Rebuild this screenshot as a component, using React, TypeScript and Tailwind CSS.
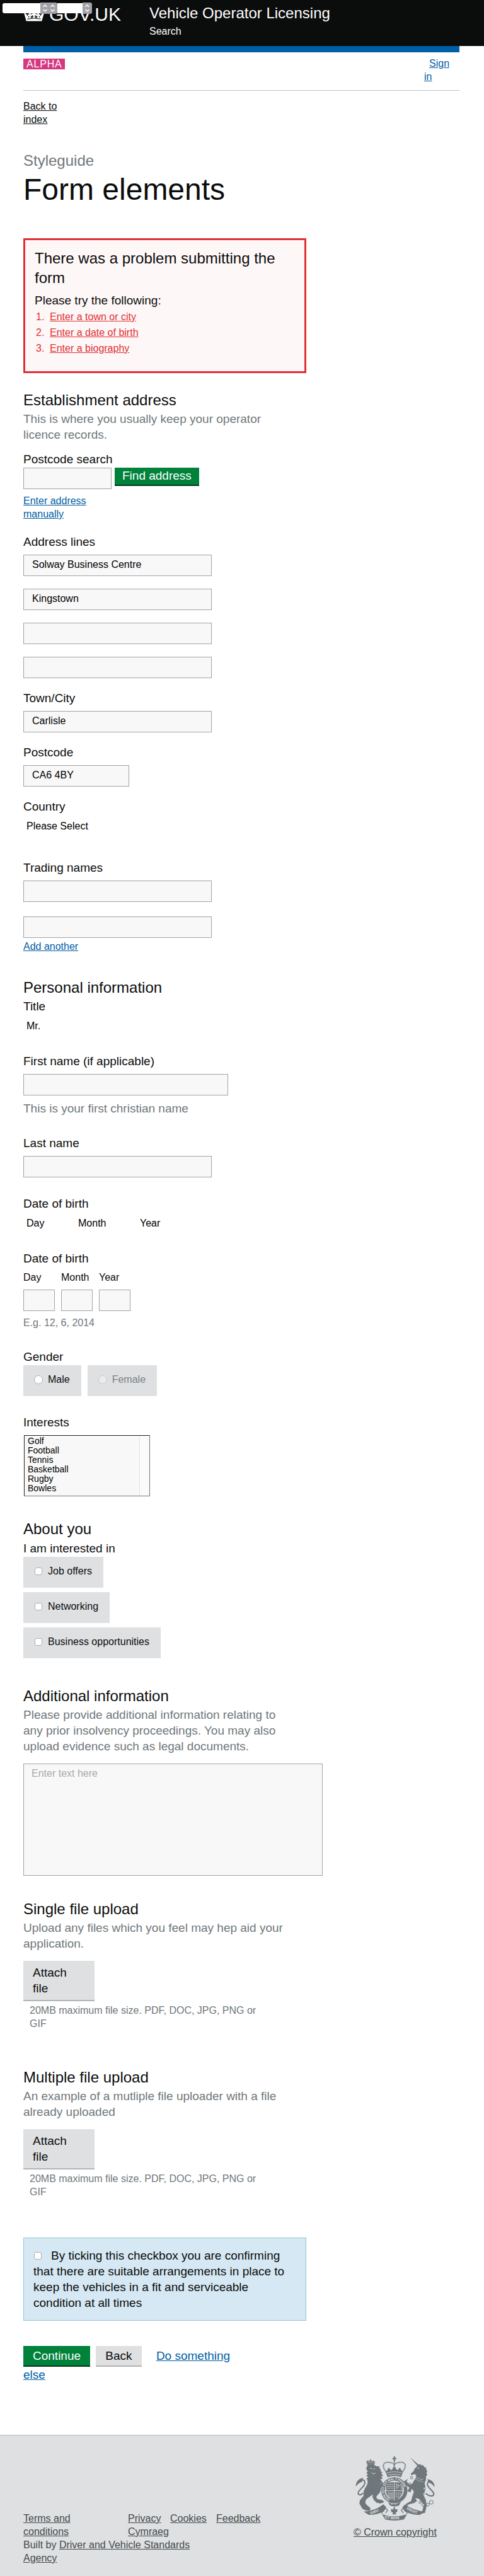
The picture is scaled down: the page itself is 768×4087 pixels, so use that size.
import React, { type ReactNode } from "react";

const inputBase =
  "block h-[34px] rounded-none border border-[#a1a3a5] bg-[#f8f8f8] px-[13px] pb-[3px] text-base text-black outline-none";
const linkBlue = "text-[#005ea5] underline";
const selectBase =
  "block h-[34px] appearance-none bg-transparent pl-[5px] pb-[13px] text-base leading-[21px] text-black outline-none";

function Heading({ children }: { children: ReactNode }) {
  return <h2 className="text-2xl leading-[31px]">{children}</h2>;
}

function Hint({ children }: { children: ReactNode }) {
  return <p className="mt-0.5 max-w-[415px] text-[19px] leading-[25px] text-[#6f777b]">{children}</p>;
}

function Label({ htmlFor, children }: { htmlFor: string; children: ReactNode }) {
  return (
    <label htmlFor={htmlFor} className="mb-2 block text-[19px] leading-[25px]">
      {children}
    </label>
  );
}

function Choice({ type, name, label, disabled }: { type: "radio" | "checkbox"; name: string; label: string; disabled?: boolean }) {
  return (
    <label
      className={`flex h-[49px] w-fit items-start bg-[#dee0e2] pt-3 pr-[18px] text-base leading-[21px] ${
        type === "radio" ? "gap-2 pl-[17px]" : "gap-[9px] pl-[18px]"
      } ${disabled ? "text-[#7b8285]" : ""}`}
    >
      <input
        type={type}
        name={name}
        disabled={disabled}
        className={
          type === "radio"
            ? "mt-1 size-3.5 appearance-none rounded-full border border-[#b0b0b0] bg-white checked:bg-[#333] disabled:border-[#c8c8c8] disabled:bg-[#ececee]"
            : "mt-[5px] size-3 appearance-none rounded-[3px] border border-[#b0b0b0] bg-white checked:bg-[#333]"
        }
      />
      {label}
    </label>
  );
}

function Upload({ id, multiple }: { id: string; multiple?: boolean }) {
  return (
    <>
      <label
        htmlFor={id}
        className="mt-[15px] block w-[113px] cursor-pointer border-b-2 border-[#b2b4b6] bg-[#dee0e2] px-[15px] py-1.5 pr-8 text-[19px] leading-[25px]"
      >
        Attach file
        <input id={id} type="file" multiple={multiple} className="sr-only" />
      </label>
      <p className="mt-1 ml-2.5 max-w-[380px] text-base leading-[21px] text-[#6f777b]">
        20MB maximum file size. PDF, DOC, JPG, PNG or GIF
      </p>
    </>
  );
}

function Arrows() {
  return (
    <svg viewBox="0 0 15 18" className="h-[18px] w-[15px]" aria-hidden="true">
      <path d="M0 0h12q3 0 3 3v12q0 3-3 3H0z" fill="#a3a2a7" />
      <path d="M4.5 7 7.5 4l3 3M4.5 11l3 3 3-3" fill="none" stroke="#fff" strokeWidth="1.5" />
    </svg>
  );
}

function MiniSelect({ label, field }: { label: string; field: string }) {
  return (
    <div className="flex items-center">
      <select aria-label={label} className={`h-4 appearance-none bg-white text-xs outline-none ${field}`}>
        <option value=""></option>
      </select>
      <Arrows />
    </div>
  );
}

function Crown() {
  return (
    <svg viewBox="0 0 34 29" className="h-[29px] w-[34px]" aria-hidden="true" fill="#fff">
      <path d="M16 1h2v2h2v2h-2v3h-2V5h-2V3h2z" />
      <circle cx="9" cy="9" r="2.5" />
      <circle cx="25" cy="9" r="2.5" />
      <circle cx="3.5" cy="13" r="2.4" />
      <circle cx="30.5" cy="13" r="2.4" />
      <path d="M1 15.5 4.5 17 9 23.5l.4-3.1-2.2.9v-4l2.3 1-.8-2.5h3.6l-.8 2.5 2.2-1v4l-2.2-.9.6 3.1 3.7-1-.6-3.6-2.2 1v-4l2.5 1-.8-2.8h4.6l-.8 2.8 2.5-1v4l-2.2-1-.6 3.6 3.7 1 .6-3.1-2.2.9v-4l2.2 1-.8-2.5h3.6l-.8 2.5 2.3-1v4l-2.2-.9.4 3.1 4.5-6.5 3.5-1.5-3.7 13H4.7z" />
      <path d="M6 25.2q11-2.4 22 0" fill="none" stroke="#0b0c0c" strokeWidth="1" />
    </svg>
  );
}

function Crest() {
  return (
    <svg viewBox="70 78 384 312" className="mx-auto h-[104px] w-32" aria-hidden="true" fill="#6f777b">
      <defs>
        <path id="motto" d="M233 291A54 54 0 1 1 284 290" />
        <path id="dieu" d="M146 358Q172 350 198 334" />
        <path id="etmon" d="M212 376Q258 386 306 376" />
        <path id="droit" d="M315 332Q344 352 378 358" />
      </defs>
      {/* lion */}
      <path d="M128 128l5-8 32 4 7 4 18 2-5 6 11 10-6 2 12 12-7 2 11 13h-10l7 13-11 2 13 20 5 12-16-12-6-4 4 20c6 14 0 26-10 36s-12 16-5 22l25 6 8 10-18 6-18-4-12-12c-8-10-10-20-6-28-14 12-28 20-34 28l-2 14c7 12 17 15 25 25l-5 12-18-2-16-8-14-24 2-16 18-22c-4-18 4-33 14-48 8-12 6-24 0-34l8-6-10-8 8-4-6-10 6-8-8-8z" />
      <path d="M128 120l-3-14 8-6 5 4 7-9 8 9 6-3 7 7-4 16z" />
      <path d="M129 112h34M133 105h26" stroke="#dee0e2" strokeWidth="2.5" strokeDasharray="4 3" />
      <path d="M142 138l9 2M158 142l8-2M150 158l8 8 10-5" fill="none" stroke="#dee0e2" strokeWidth="3" />
      <path d="M108 256c-10 14-22 10-22 0 0-16 32-28 32-50 0-18-18-14-28 0" fill="none" stroke="#6f777b" strokeWidth="6" />
      <path d="M75 226c0-24 12-38 35-42-4 8-3 14-6 20-8 0-20 8-29 22z" />
      <path d="M184 204l20 14 12 20-10 6-8-10-18-14z" />
      {/* central crown */}
      <path d="M255 82h7v7h6v6h-6v9h-7v-9h-6v-6h6z" />
      <path d="M222 158c-28-30-16-52 10-48 14 2 24 4 26 14 2-10 12-12 26-14 26-4 38 18 10 48" fill="none" stroke="#6f777b" strokeWidth="6" strokeDasharray="4 2" />
      <path d="M258 104v52" fill="none" stroke="#6f777b" strokeWidth="6" strokeDasharray="4 2" />
      <path d="M217 155l8-8 4-10h7l4 10 8-3 5-11h10l5 11 8 3 4-10h7l4 10 8 8-9 26q-32-13-64 0z" />
      <path d="M222 160q36-10 72 0M228 170q30-8 60 0" fill="none" stroke="#dee0e2" strokeWidth="2.5" />
      {/* garter and shield */}
      <circle cx="258" cy="243" r="54" fill="none" stroke="#6f777b" strokeWidth="17" />
      <text fontSize="15" fontWeight="700" fill="#dee0e2" dy="5" fontFamily="Liberation Sans">
        <textPath href="#motto">HONI SOIT QUI MAL Y PENSE</textPath>
      </text>
      <path d="M219 210q39-12 78 0v44q-8 26-39 39-31-13-39-39z" />
      <path d="M258 204v88M217 245h82" stroke="#dee0e2" strokeWidth="3" />
      <path d="M224 215h28M224 224h28M224 233h28M264 256h28M264 265h26M264 274h20" stroke="#dee0e2" strokeWidth="3" strokeDasharray="7 3" />
      <path d="M268 238v-26l14 10 10-10v26M230 252v28M237 252v30M244 252v32M251 252v34M276 216v18" fill="none" stroke="#dee0e2" strokeWidth="2.5" />
      <path d="M228 300q30 18 62-2l-10 18q-22 8-42 0z" />
      <circle cx="247" cy="308" r="3" fill="#dee0e2" />
      <circle cx="264" cy="308" r="3" fill="#dee0e2" />
      {/* unicorn */}
      <path d="M333 86l44 38-6 6zM372 122l8-4 6 6 10 0 4 8 10 4 0 8 5 8-4 8 4 10-6 6 0 16-7 18c8 20 4 38-6 54l12 24 4 30-8 32-16 4 8-30-4-22-16-18-18-4 8 14-14 10-24 6-20 12 8-16 22-12 4-16 6-18c6-10 0-18-8-24l-4 16-16-4 10-18-16-10-10-20 20-12-8 12 8 10 18 4 8-14 10-16 2-14-10-4-12 6-4-8 14-12 4-10z" />
      <circle cx="372" cy="138" r="3" fill="#dee0e2" />
      <path d="M354 174q20 18 44 18M352 184q20 16 44 18" fill="none" stroke="#dee0e2" strokeWidth="3" strokeDasharray="5 3" />
      <path d="M408 258c22 18 38 14 38 2 0-14-36-32-30-50 4-14 18-10 26 4" fill="none" stroke="#6f777b" strokeWidth="6" />
      <path d="M450 228c-2-22-12-34-34-38l4 16c12 2 20 8 30 22z" />
      <g fill="#dee0e2" stroke="#6f777b" strokeWidth="3">
        <circle cx="340" cy="183" r="6" />
        <circle cx="332" cy="212" r="5" />
        <circle cx="401" cy="234" r="5" />
        <circle cx="397" cy="260" r="4" />
        <circle cx="381" cy="300" r="6" />
        <circle cx="395" cy="313" r="6" />
        <circle cx="418" cy="311" r="7" />
        <circle cx="434" cy="300" r="9" />
      </g>
      {/* ribbon */}
      <path d="M112 344q54-2 94-34l14 14-12 20q-40 18-72 16zM404 344q-54-2-94-34l-14 14 12 20q40 18 72 16z" />
      <path d="M200 358q58 18 118 0l-14 24q-46 10-90 0z" />
      <path d="M202 356c-10-12 6-32 22-22 8 10-8 8-6 18M316 356c10-12-6-32-22-22-8 10 8 8 6 18" fill="none" stroke="#6f777b" strokeWidth="4" />
      <path d="M255 324h6l2 12q10-8 10 2t-9 10l3 10h-18l3-10q-10 0-10-10t11-2z" />
      <g fontSize="18" fontWeight="700" fill="#dee0e2" fontFamily="Liberation Sans">
        <text><textPath href="#dieu">DIEU</textPath></text>
        <text><textPath href="#etmon">ET MON</textPath></text>
        <text><textPath href="#droit">DROIT</textPath></text>
      </g>
    </svg>
  );
}

const problems = ["Enter a town or city", "Enter a date of birth", "Enter a biography"];
const addressLines = ["Solway Business Centre", "Kingstown", "", ""];
const sports = ["Golf", "Football", "Tennis", "Basketball", "Rugby", "Bowles"];
const topics = ["Job offers", "Networking", "Business opportunities"];

export default function App() {
  return (
    <div className="min-h-screen bg-white font-['Liberation_Sans',Arial,sans-serif] text-[#0b0c0c]">
      <header className="relative h-[73px] bg-[#0b0c0c] pr-[39px] pl-[37px] text-white">
        <div className="absolute top-1 left-1 z-10 flex h-[18px] items-center">
          <MiniSelect label="Day" field="w-[60px] rounded-l-[3px]" />
          <MiniSelect label="Month" field="-ml-[3px] w-0" />
          <MiniSelect label="Year" field="w-10" />
        </div>
        <div className="grid grid-cols-[200px_1fr]">
          <a href="#" className="flex items-start gap-[7px] pt-[5px]">
            <Crown />
            <span className="pt-[3px] text-3xl leading-[30px]">GOV.UK</span>
          </a>
          <div className="flex flex-col items-start gap-[3px] pt-[5px]">
            <a href="#" className="text-2xl leading-[31px]">Vehicle Operator Licensing</a>
            <a href="#" className="text-base leading-[21px]">Search</a>
          </div>
        </div>
      </header>

      <div className="mr-[39px] ml-[37px]">
        <div className="h-2.5 bg-[#005ea5]" />
        <div className="flex h-[61px] items-start justify-between border-b border-[#bfc1c3]">
          <strong className="mt-2.5 h-[17px] bg-[#d53880] px-[5px] text-base leading-[17px] font-normal tracking-wider text-white">
            ALPHA
          </strong>
          <nav className="w-14 pt-[7px] text-base leading-[21px]">
            <a href="#" className={`${linkBlue} ml-2`}>Sign in</a>
          </nav>
        </div>

        <div className="mt-3.5 w-[60px] text-base leading-[21px]">
          <a href="#" className="underline">Back to index</a>
        </div>

        <main>
          <p className="mt-[39px] text-2xl leading-[31px] text-[#6f777b]">Styleguide</p>
          <h1 className="mt-1.5 text-5xl leading-[50px]">Form elements</h1>

          <section className="mt-[52px] h-[214px] max-w-[449px] border-3 border-[#df3034] bg-[#fef7f7] px-[15px] pt-[13px]">
            <Heading>There was a problem submitting the form</Heading>
            <p className="mt-2 text-[19px] leading-[25px]">Please try the following:</p>
            <ol className="mt-px text-base leading-[25px] text-[#df3034]">
              {problems.map((p, i) => (
                <li key={p} className="flex pl-0.5">
                  <span className="w-[22px]">{i + 1}.</span>
                  <a href="#" className="underline">{p}</a>
                </li>
              ))}
            </ol>
          </section>

          <form onSubmit={(e) => e.preventDefault()}>
            <section className="mt-[27px]">
              <Heading>Establishment address</Heading>
              <Hint>This is where you usually keep your operator licence records.</Hint>
              <label htmlFor="search" className="mt-3.5 mb-px block text-[19px] leading-[25px]">Postcode search</label>
              <div className="flex items-start gap-[5px]">
                <input id="search" type="text" className={`${inputBase} w-[140px]`} />
                <button type="button" className="border-b-2 border-[#003618] bg-[#00823b] px-3 pb-0.5 text-[19px] leading-[25px] text-white">
                  Find address
                </button>
              </div>
              <div className="mt-2 w-[140px] text-base leading-[21px]">
                <a href="#" className={linkBlue}>Enter address manually</a>
              </div>

              <div className="mt-[21px]">
                <Label htmlFor="line0">Address lines</Label>
                <div className="flex flex-col gap-5">
                  {addressLines.map((v, i) => (
                    <input key={i} id={`line${i}`} aria-label={`Address line ${i + 1}`} type="text" defaultValue={v} className={`${inputBase} w-[299px]`} />
                  ))}
                </div>
              </div>
              <div className="mt-[19px]">
                <Label htmlFor="town">Town/City</Label>
                <input id="town" type="text" defaultValue="Carlisle" className={`${inputBase} w-[299px]`} />
              </div>
              <div className="mt-[19px]">
                <Label htmlFor="postcode">Postcode</Label>
                <input id="postcode" type="text" defaultValue="CA6 4BY" className={`${inputBase} w-[168px]`} />
              </div>
              <div className="mt-[19px]">
                <Label htmlFor="country">Country</Label>
                <select id="country" className={`${selectBase} w-[168px]`}>
                  <option>Please Select</option>
                </select>
              </div>
              <div className="mt-[30px]">
                <Label htmlFor="trading0">Trading names</Label>
                <div className="flex flex-col gap-[23px]">
                  <input id="trading0" type="text" className={`${inputBase} w-[299px]`} />
                  <input id="trading1" aria-label="Trading name 2" type="text" className={`${inputBase} w-[299px]`} />
                </div>
                <div className="mt-[3px] text-base leading-[21px]">
                  <a href="#" className={linkBlue}>Add another</a>
                </div>
              </div>
            </section>

            <section className="mt-[39px]">
              <Heading>Personal information</Heading>
              <div className="mt-0.5">
                <Label htmlFor="title">Title</Label>
                <select id="title" className={`${selectBase} w-20`}>
                  <option>Mr.</option>
                </select>
              </div>
              <div className="mt-5">
                <Label htmlFor="first">First name (if applicable)</Label>
                <input id="first" type="text" className={`${inputBase} w-[325px]`} />
                <p className="mt-2 text-[19px] leading-[25px] text-[#6f777b]">This is your first christian name</p>
              </div>
              <div className="mt-[30px]">
                <Label htmlFor="last">Last name</Label>
                <input id="last" type="text" className={`${inputBase} w-[299px]`} />
              </div>
              <fieldset className="mt-[29px]">
                <legend className="mb-2 text-[19px] leading-[25px]">Date of birth</legend>
                <div className="flex">
                  <select aria-label="Day" className={`${selectBase} w-[82px]`}><option>Day</option></select>
                  <select aria-label="Month" className={`${selectBase} w-[98px]`}><option>Month</option></select>
                  <select aria-label="Year" className={`${selectBase} w-[82px]`}><option>Year</option></select>
                </div>
              </fieldset>
              <fieldset className="mt-5">
                <legend className="mb-[7px] text-[19px] leading-[25px]">Date of birth</legend>
                <div className="flex gap-2.5">
                  {["Day", "Month", "Year"].map((part) => (
                    <label key={part} className="flex w-[50px] flex-col gap-[9px] text-base leading-[21px]">
                      {part}
                      <input type="text" className={`${inputBase} w-full`} />
                    </label>
                  ))}
                </div>
                <p className="mt-2 text-base leading-[21px] text-[#6f777b]">E.g. 12, 6, 2014</p>
              </fieldset>
              <fieldset className="mt-[31px]">
                <legend className="mb-px text-[19px] leading-[25px]">Gender</legend>
                <div className="flex gap-2.5">
                  <Choice type="radio" name="gender" label="Male" />
                  <Choice type="radio" name="gender" label="Female" disabled />
                </div>
              </fieldset>
              <div className="mt-[29px]">
                <Label htmlFor="interests">Interests</Label>
                <div className="ml-px flex h-[97px] w-[200px] border border-t-[#222] border-r-[#767676] border-b-[#767676] border-l-[#222] bg-[#f8f8f8]">
                  <select id="interests" multiple size={6} className="min-w-0 flex-1 appearance-none overflow-hidden pl-[5px] text-sm leading-[15px] text-black outline-none">
                    {sports.map((s) => (
                      <option key={s} className="h-[15px] min-h-0 p-0 leading-[15px]">{s}</option>
                    ))}
                  </select>
                  <div className="w-4 border-l border-[#e4e4e4] bg-[#fafafa]" />
                </div>
              </div>
            </section>

            <section className="mt-9">
              <Heading>About you</Heading>
              <fieldset className="mt-[3px]">
                <legend className="mb-px text-[19px] leading-[25px]">I am interested in</legend>
                <div className="flex flex-col gap-[7px]">
                  {topics.map((t) => (
                    <Choice key={t} type="checkbox" name="topics" label={t} />
                  ))}
                </div>
              </fieldset>
            </section>

            <section className="mt-11">
              <Heading>Additional information</Heading>
              <Hint>
                Please provide additional information relating to any prior insolvency proceedings. You may also upload evidence such as legal documents.
              </Hint>
              <textarea
                aria-label="Additional information"
                placeholder="Enter text here"
                className="mt-[15px] block h-[178px] w-[475px] max-w-full resize-none border border-[#a1a3a5] bg-[#f8f8f8] px-3 pt-1 text-base leading-[21px] outline-none placeholder:text-[#a9a9a9]"
              />
            </section>

            <section className="mt-[37px]">
              <Heading>Single file upload</Heading>
              <Hint>Upload any files which you feel may hep aid your application.</Hint>
              <Upload id="single" />
            </section>

            <section className="mt-[59px]">
              <Heading>Multiple file upload</Heading>
              <Hint>An example of a mutliple file uploader with a file already uploaded</Hint>
              <Upload id="multiple" multiple />
            </section>

            <label className="mt-[62px] block max-w-[449px] border border-[#95c4e0] bg-[#d5e8f3] p-[15px] text-[19px] leading-[25px]">
              <input type="checkbox" className="mr-[15px] ml-px size-3 appearance-none rounded-[3px] border border-[#b0b0b0] bg-white checked:bg-[#333]" />
              By ticking this checkbox you are confirming that there are suitable arrangements in place to keep the vehicles in a fit and serviceable condition at all times
            </label>

            <div className="mt-10 w-[360px] text-[19px] leading-[25px]">
              <button type="submit" className="mr-1 border-b-2 border-[#003618] bg-[#00823b] px-[15px] py-[3px] text-white">Continue</button>{" "}
              <button type="button" className="mr-[18px] border-b-2 border-[#b2b4b6] bg-[#dee0e2] px-[15px] py-[3px]">Back</button>{" "}
              <a href="#" className={linkBlue}>Do something else</a>
            </div>
          </form>
        </main>
      </div>

      <footer className="mt-[83px] border-t border-[#b8babc] bg-[#dee0e2] pt-8 pr-[75px] pb-[19px] pl-[37px] text-base leading-[21px] text-[#454a4c]">
        <div className="flex items-start justify-between">
          <div className="pt-[89px]">
            <div className="grid w-fit grid-cols-[166px_67px_73px_auto]">
              <a href="#" className="w-[110px] underline">Terms and conditions</a>
              <div className="flex flex-col items-start">
                <a href="#" className="underline">Privacy</a>
                <a href="#" className="underline">Cymraeg</a>
              </div>
              <a href="#" className="underline">Cookies</a>
              <a href="#" className="underline">Feedback</a>
            </div>
            <p className="w-[300px]">
              Built by <a href="#" className="underline">Driver and Vehicle Standards Agency</a>
            </p>
          </div>
          <a href="#" className="w-[132px] whitespace-nowrap">
            <Crest />
            <span className="mt-[7px] block underline">© Crown copyright</span>
          </a>
        </div>
      </footer>
    </div>
  );
}
